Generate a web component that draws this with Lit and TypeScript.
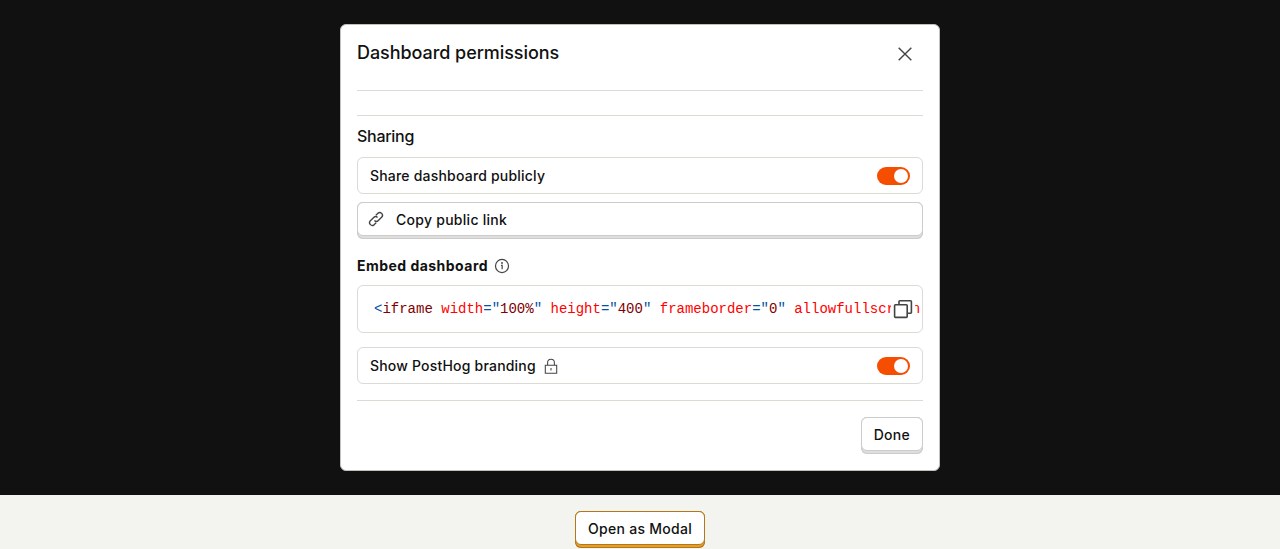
import { LitElement, html, css, svg } from "lit";
import { customElement } from "lit/decorators.js";

type Token = [kind: "punct" | "tag" | "attr" | "plain", text: string];

const attribute = (name: string, value: string): Token[] => [
  ["attr", ` ${name}`],
  ["punct", '="'],
  ["tag", value],
  ["punct", '"'],
];

const EMBED_CODE: Token[] = [
  ["punct", "<"],
  ["tag", "iframe"],
  ...attribute("width", "100%"),
  ...attribute("height", "400"),
  ...attribute("frameborder", "0"),
  ["attr", " allowfullscreen"],
];

const closeIcon = svg`<path d="M4.4 4.4l15.2 15.2M19.6 4.4L4.4 19.6" />`;
const linkIcon = svg`<path d="M12.2 17L9.4 19.8A3.7 3.7 0 0 1 4.2 14.6L8.9 9.9A3.7 3.7 0 0 1 14.1 9.9M11.8 7L14.6 4.2A3.7 3.7 0 0 1 19.8 9.4L15.1 14.1A3.7 3.7 0 0 1 9.9 14.1" />`;
const infoIcon = svg`<circle cx="12" cy="12" r="8.7" /><path d="M10.7 11.2h1.5v5" /><circle cx="12" cy="8" r=".5" />`;
const lockIcon = svg`<path d="M4.4 11h15.2v10.6H4.4zM7.5 11V7.4a4.5 4.5 0 0 1 9 0V11M12 14.5v3.6" />`;
const copyIcon = svg`<path d="M8 7.8V4.6a.8.8 0 0 1 .8-.8h10.8a.8.8 0 0 1 .8.8v10.8a.8.8 0 0 1-.8.8h-3.4" /><rect x="3.6" y="7.8" width="12.6" height="12.6" rx=".8" />`;

@customElement("app-root")
export class AppRoot extends LitElement {
  static styles = css`
    :host {
      display: block;
      height: 549px;
      overflow: hidden;
      background: #f3f4ef;
      color: #111;
      font: 500 14px/20px Inter, sans-serif;
      letter-spacing: 0.2px;
    }
    * { box-sizing: border-box; }
    svg {
      display: block;
      fill: none;
      stroke: #444;
      flex: none;
    }
    .backdrop {
      display: flex;
      justify-content: center;
      align-items: flex-start;
      height: 495px;
      padding-top: 24px;
      background: #111;
    }
    .modal {
      width: 600px;
      height: 447px;
      padding: 0 16px;
      background: #fff;
      border: 1px solid #c1c2b9;
      border-radius: 6px;
    }
    .header {
      display: flex;
      justify-content: space-between;
      height: 66px;
      padding: 14px 8px 0 0;
      border-bottom: 1px solid #dadbd2;
    }
    .title {
      margin: 0;
      font-size: 18px;
      line-height: 28px;
      font-weight: 500;
      letter-spacing: -0.06px;
    }
    .close { width: 20px; height: 20px; margin-top: 5px; }
    .sharing {
      margin-top: 24px;
      padding-top: 8px;
      border-top: 1px solid #dadbd2;
    }
    .sharing h3 {
      margin: 0 0 9px;
      font-size: 16px;
      line-height: 24px;
      font-weight: 500;
      letter-spacing: -0.28px;
    }
    .row {
      display: flex;
      align-items: center;
      height: 37px;
      padding: 0 12px;
      border: 1px solid #dadbd2;
      border-radius: 6px;
    }
    .lock { width: 18px; height: 18px; margin-left: 6px; }
    .switch {
      width: 33px;
      height: 18px;
      margin-left: auto;
      padding: 2px;
      border-radius: 9px;
      background: #f54e00;
    }
    .knob {
      width: 14px;
      height: 14px;
      margin-left: 15px;
      border-radius: 50%;
      background: #fff;
    }
    .button {
      display: block;
      height: 37px;
      padding: 0 0 3px;
      color: #111;
      font: inherit;
      letter-spacing: 0.27px;
      background: #e0dddd;
      border: 0;
      border-radius: 6px;
      box-shadow: inset 0 0 0 1px #ccc;
    }
    .surface {
      display: flex;
      align-items: center;
      height: 34px;
      padding: 2px 12px 0;
      background: #fff;
      border: 1px solid #ccc;
      border-radius: 6px;
    }
    .wide { width: 100%; margin-top: 8px; }
    .wide .surface { padding-left: 10px; }
    .link { width: 18px; height: 18px; margin: -2px 11px 0 -1px; }
    .embed {
      display: flex;
      align-items: center;
      height: 20px;
      margin: 17px 0 9px;
      font-weight: 700;
      letter-spacing: 0.47px;
    }
    .info { width: 18px; height: 18px; margin-left: 5px; }
    .code {
      position: relative;
      height: 48px;
      margin-bottom: 14px;
      border: 1px solid #dadbd2;
      border-radius: 6px;
    }
    .code pre {
      margin: 0;
      padding: 13px 0 0 16px;
      overflow: hidden;
      font: 14px/21px "Liberation Mono", monospace;
      letter-spacing: 0;
    }
    .punct { color: #0451a5; }
    .tag { color: #800000; }
    .attr { color: #f00; }
    .copy {
      position: absolute;
      top: 11px;
      right: 7px;
      width: 24px;
      height: 24px;
      background: #fff;
    }
    .footer {
      display: flex;
      justify-content: flex-end;
      margin-top: 16px;
      padding-top: 16px;
      border-top: 1px solid #dadbd2;
    }
    .page {
      display: flex;
      justify-content: center;
      padding-top: 16px;
    }
    .page .button {
      background: #e89c2c;
      box-shadow: inset 0 0 0 1px #b17816;
    }
    .page .surface { border-color: #b17816; }
  `;

  private icon(name: string, shape: unknown, stroke: number) {
    return html`<svg class=${name} viewBox="0 0 24 24" stroke-width=${stroke}>${shape}</svg>`;
  }

  private toggle() {
    return html`<div class="switch" role="switch" aria-checked="true"><div class="knob"></div></div>`;
  }

  render() {
    return html`
      <div class="backdrop">
        <div class="modal" role="dialog">
          <div class="header">
            <h2 class="title">Dashboard permissions</h2>
            ${this.icon("close", closeIcon, 1.7)}
          </div>
          <div class="sharing">
            <h3>Sharing</h3>
            <div class="row"><span>Share dashboard publicly</span>${this.toggle()}</div>
            <button class="button wide">
              <span class="surface">${this.icon("link", linkIcon, 1.8)}Copy public link</span>
            </button>
            <div class="embed">Embed dashboard${this.icon("info", infoIcon, 1.6)}</div>
            <div class="code">
              <pre>${EMBED_CODE.map(([kind, text]) => html`<span class=${kind}>${text}</span>`)}</pre>
              ${this.icon("copy", copyIcon, 1.6)}
            </div>
            <div class="row">
              <span>Show PostHog branding</span>${this.icon("lock", lockIcon, 1.4)}${this.toggle()}
            </div>
          </div>
          <div class="footer">
            <button class="button"><span class="surface">Done</span></button>
          </div>
        </div>
      </div>
      <div class="page">
        <button class="button"><span class="surface">Open as Modal</span></button>
      </div>
    `;
  }
}
